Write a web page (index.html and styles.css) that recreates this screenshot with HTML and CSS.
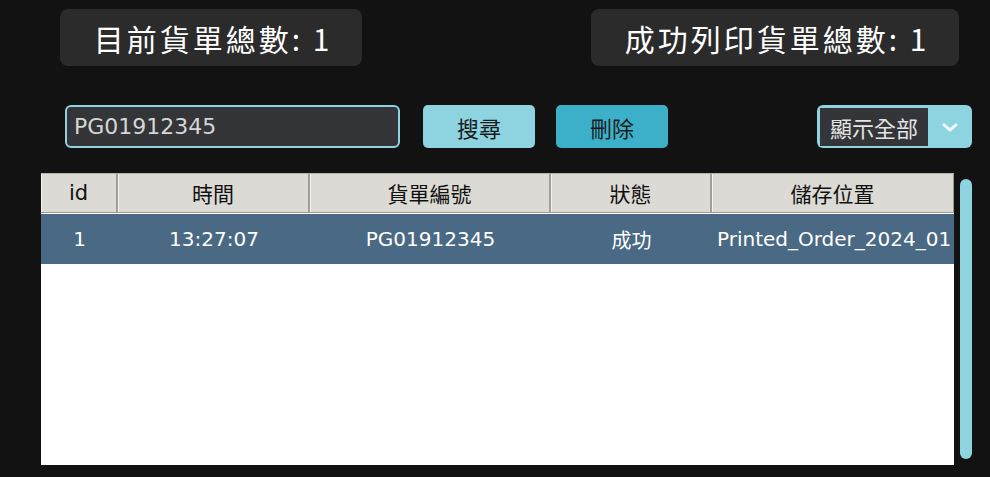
FILE: index.html
```html
<!DOCTYPE html>
<html lang="zh-Hant">
<head>
<meta charset="utf-8">
<title>貨單列印</title>
<link rel="stylesheet" href="styles.css">
</head>
<body>
<div class="app">
  <div class="stats">
    <div class="card card-total">目前貨單總數: 1</div>
    <div class="card card-printed">成功列印貨單總數: 1</div>
  </div>
  <div class="controls">
    <div class="search-box">PG01912345</div>
    <button class="btn btn-search">搜尋</button>
    <button class="btn btn-delete">刪除</button>
    <div class="select">
      <span class="select-value">顯示全部</span>
      <span class="select-arrow">
        <svg width="16" height="9" viewBox="0 0 16 9"><polyline points="2,1.8 8,7 14,1.8" fill="none" stroke="#eef8fa" stroke-width="3" stroke-linecap="round" stroke-linejoin="round"/></svg>
      </span>
    </div>
  </div>
  <div class="table-area">
    <div class="table">
      <div class="thead">
        <div class="th">id</div>
        <div class="th">時間</div>
        <div class="th">貨單編號</div>
        <div class="th">狀態</div>
        <div class="th th-last">儲存位置</div>
      </div>
      <div class="tr selected">
        <div class="td">1</div>
        <div class="td">13:27:07</div>
        <div class="td">PG01912345</div>
        <div class="td td-cjk">成功</div>
        <div class="td td-left">Printed_Order_2024_01</div>
      </div>
    </div>
    <div class="scrollbar"></div>
  </div>
</div>
</body>
</html>
```
FILE: styles.css
```css
html, body {
  margin: 0;
  padding: 0;
  background: #121212;
}
.app {
  width: 990px;
  height: 477px;
  overflow: hidden;
  font-family: "Noto Sans CJK TC", "Noto Sans", sans-serif;
}
.stats {
  display: flex;
  justify-content: space-between;
  padding: 9px 31px 0 60px;
}
.card {
  height: 57px;
  background: #2b2b2b;
  border-radius: 8px;
  color: #ffffff;
  font-size: 30px;
  letter-spacing: 3px;
  display: flex;
  align-items: center;
  justify-content: center;
  box-sizing: border-box;
  padding-left: 4px;
}
.card-total { width: 302px; }
.card-printed { width: 368px; }

.controls {
  display: flex;
  align-items: center;
  margin-top: 39px;
  padding: 0 18px 0 65px;
  height: 43px;
}
.search-box {
  width: 335px;
  height: 43px;
  box-sizing: border-box;
  border: 2.5px solid #8dd3e0;
  border-radius: 6px;
  background: #333538;
  color: #d6d6d6;
  font-family: "DejaVu Sans", sans-serif;
  font-size: 22px;
  padding-left: 7px;
  display: flex;
  align-items: center;
}
.btn {
  width: 112px;
  height: 43px;
  border: none;
  border-radius: 5px;
  font-family: "Noto Sans CJK TC", sans-serif;
  font-size: 22px;
  color: #1b1b1b;
  padding: 0;
}
.btn-search {
  margin-left: 23px;
  background: #8dd3e0;
}
.btn-delete {
  margin-left: 21px;
  background: #3bb0c8;
}
.select {
  margin-left: auto;
  width: 155px;
  height: 43px;
  box-sizing: border-box;
  background: #8dd3e0;
  border-radius: 6px;
  padding: 3px 0 2px 3px;
  display: flex;
}
.select-value {
  width: 108px;
  background: #333538;
  color: #e4e4e4;
  font-size: 22px;
  display: flex;
  align-items: center;
  justify-content: center;
}
.select-arrow {
  flex: 1;
  display: flex;
  align-items: center;
  justify-content: center;
  padding-top: 1px;
}

.table-area {
  display: flex;
  margin-top: 25px;
  padding-left: 41px;
}
.table {
  width: 913px;
  height: 292px;
  background: #ffffff;
}
.thead, .tr {
  display: grid;
  grid-template-columns: 77px 192px 241px 161px 242px;
}
.th {
  height: 40px;
  box-sizing: border-box;
  background: #dcdad5;
  border-top: 1px solid #b9b5ad;
  border-bottom: 1px solid #9e9a91;
  border-right: 2px solid #a19e97;
  box-shadow: inset 1px 0 #f4f3f0;
  color: #111111;
  font-family: "DejaVu Sans", "Noto Sans CJK TC", sans-serif;
  font-size: 21px;
  display: flex;
  align-items: center;
  justify-content: center;
}
.th-last { border-right: 1px solid #9e9a91; }
.tr {
  height: 50px;
  margin-top: 1px;
}
.selected { background: #4a6984; }
.td {
  color: #ffffff;
  font-family: "DejaVu Sans", "Noto Sans CJK TC", sans-serif;
  font-size: 20px;
  display: flex;
  align-items: center;
  justify-content: center;
  white-space: nowrap;
  overflow: hidden;
}
.td-cjk {
  font-family: "Noto Sans CJK TC", sans-serif;
}
.td-left {
  justify-content: flex-start;
  padding-left: 5px;
}
.scrollbar {
  width: 12px;
  height: 280px;
  margin: 6px 0 0 6px;
  background: #8dd3e0;
  border-radius: 6px;
}
```
